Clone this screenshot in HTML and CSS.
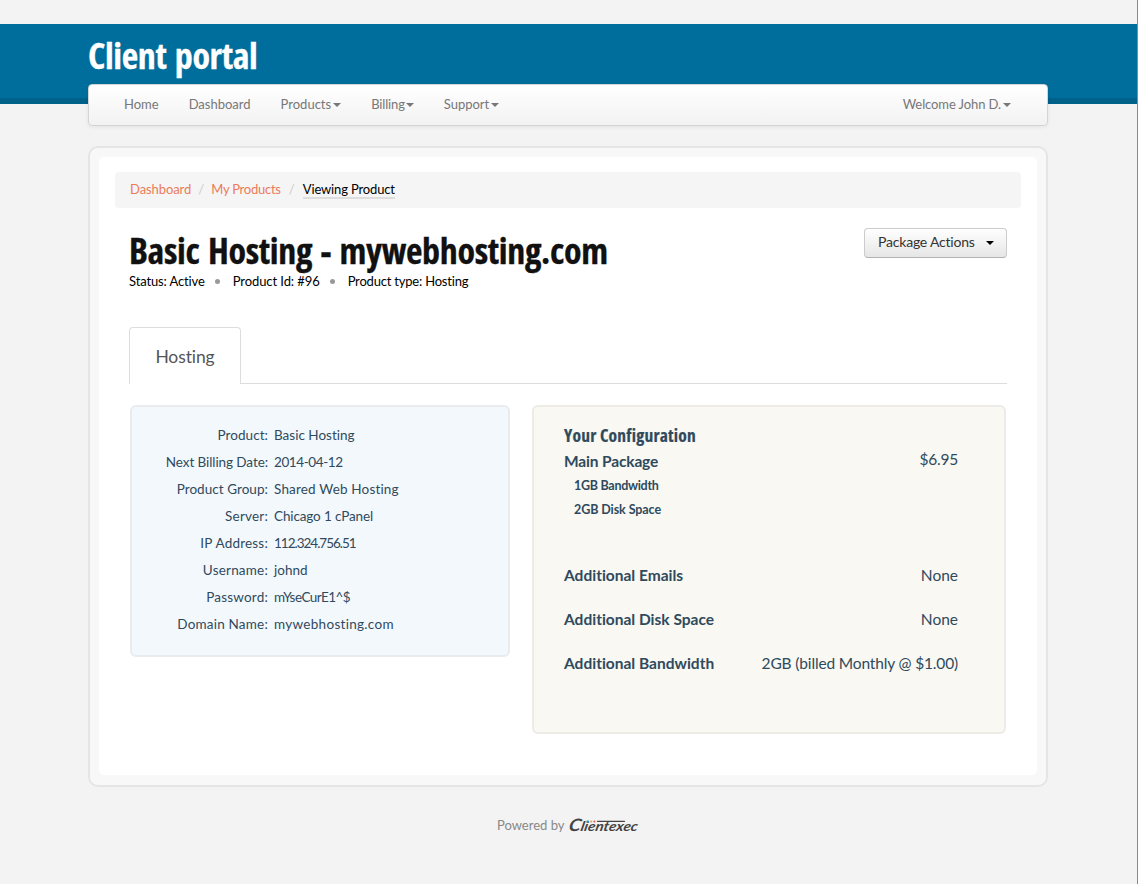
FILE: index.html
```html
<!DOCTYPE html>
<html lang="en">
<head>
<meta charset="utf-8">
<title>Client portal</title>
<link rel="stylesheet" href="styles.css">
</head>
<body>
<header class="masthead">
  <div class="container">
    <h1 class="brand">Client portal</h1>
    <nav class="navbar">
      <a class="nav-home">Home</a>
      <a class="nav-dash">Dashboard</a>
      <a class="nav-products">Products<i class="caret"></i></a>
      <a class="nav-billing">Billing<i class="caret"></i></a>
      <a class="nav-support">Support<i class="caret"></i></a>
      <a class="nav-user">Welcome John D.<i class="caret"></i></a>
    </nav>
  </div>
</header>
<main class="container frame">
  <div class="page">
    <div class="breadcrumb">
      <a class="crumb-home">Dashboard</a><span class="sep">/</span><a class="crumb-products">My Products</a><span class="sep last">/</span><span class="current">Viewing Product</span>
    </div>
    <div class="content">
      <div class="heading">
        <div>
          <h2 class="title">Basic Hosting - mywebhosting.com</h2>
          <div class="meta">
            <span class="m-status">Status: Active</span><b class="dot"></b><span class="m-id">Product Id: #96</span><b class="dot"></b><span class="m-type">Product type: Hosting</span>
          </div>
        </div>
        <button class="btn"><span>Package Actions</span><i class="caret"></i></button>
      </div>
      <div class="tabs"><div class="tab"><span>Hosting</span></div></div>
      <div class="panels">
        <dl class="panel details">
          <dt>Product:</dt><dd>Basic Hosting</dd>
          <dt class="tight">Next Billing Date:</dt><dd class="date">2014-04-12</dd>
          <dt>Product Group:</dt><dd class="group">Shared Web Hosting</dd>
          <dt class="wide">Server:</dt><dd class="server">Chicago 1 cPanel</dd>
          <dt class="wide">IP Address:</dt><dd class="ip">112.324.756.51</dd>
          <dt class="wide">Username:</dt><dd>johnd</dd>
          <dt class="wide">Password:</dt><dd class="password">mYseCurE1^$</dd>
          <dt class="wide">Domain Name:</dt><dd class="domain">mywebhosting.com</dd>
        </dl>
        <section class="panel config">
          <h3>Your Configuration</h3>
          <div class="row main"><strong>Main Package</strong><span>$6.95</span></div>
          <ul><li class="bandwidth">1GB Bandwidth</li><li>2GB Disk Space</li></ul>
          <div class="row"><strong>Additional Emails</strong><span>None</span></div>
          <div class="row"><strong>Additional Disk Space</strong><span>None</span></div>
          <div class="row"><strong>Additional Bandwidth</strong><span class="billed">2GB (billed Monthly @ $1.00)</span></div>
        </section>
      </div>
    </div>
  </div>
</main>
<footer class="footer">
  <span>Powered by</span>
  <svg class="logo" width="76" height="28" viewBox="0 -4 76 28">
    <text transform="translate(1 16) skewX(-12)" textLength="69" lengthAdjust="spacingAndGlyphs"><tspan class="cap">C</tspan>lientexec</text>
    <path d="M30.5 6.3H57.5" stroke="#444" stroke-width="1.3" stroke-linecap="round"/>
    <circle cx="20.7" cy="6.5" r="1.2" fill="#2a9fd0"/><circle cx="24.2" cy="6.5" r="1.1" fill="#f0a050"/><circle cx="27.4" cy="6.5" r="1.1" fill="#e2604c"/>
  </svg>
</footer>
</body>
</html>
```
FILE: styles.css
```css
* { box-sizing: border-box; }
html { background: #f3f3f3; }
body {
  margin: 0;
  padding-top: 24px;
  height: 884px;
  overflow: hidden;
  border-right: 1px solid #8a8a8a;
  background: #f3f3f3;
  font-family: Lato, "Open Sans", sans-serif;
  font-size: 13px;
  font-variant-ligatures: none;
  line-height: 20px;
  color: #000;
}
h1, h2, h3, ul, dl, dd { margin: 0; padding: 0; }
.container { width: 960px; margin-left: 88px; }
.masthead { height: 80px; background: #006e9c; border-bottom: 6px solid #006189; }
.brand, .title, .config h3 {
  font-family: "Open Sans", sans-serif;
  font-weight: 700;
  font-stretch: 75%;
  white-space: nowrap;
}
.brand, .title { -webkit-text-stroke: .3px currentColor; }
.brand {
  height: 60px;
  font-size: 36px;
  line-height: 64px;
  letter-spacing: -.4px;
  word-spacing: 2.4px;
  color: #fff;
}
.navbar {
  position: relative;
  display: flex;
  height: 42px;
  padding: 0 36px 0 35px;
  border: 1px solid #d4d4d4;
  border-radius: 4px;
  background: linear-gradient(#fff, #f2f2f2);
  box-shadow: 0 1px 4px rgba(0, 0, 0, .065);
  line-height: 39px;
  color: #777;
}
.navbar a { margin-right: 30px; white-space: nowrap; }
.navbar .nav-billing { letter-spacing: -.15px; }
.navbar .nav-user { margin: 0 0 0 auto; letter-spacing: -.1px; }
.caret {
  display: inline-block;
  margin-left: 2px;
  vertical-align: 2px;
  border: 4px solid transparent;
  border-top-color: currentColor;
  border-bottom: 0;
}
.nav-billing .caret { margin-left: 1px; }
.frame {
  height: 641px;
  margin-top: 42px;
  padding: 9px 9px 10px;
  border: 2px solid #e5e5e5;
  border-radius: 10px;
  background: #f8f8f8;
}
.page { height: 618px; padding: 15px 16px; border-radius: 5px; background: #fff; }
.breadcrumb {
  display: flex;
  align-items: center;
  height: 36px;
  padding: 0 15px 2px;
  border-radius: 4px;
  background: #f5f5f5;
}
.breadcrumb a { color: #eb7b59; }
.breadcrumb .crumb-products { letter-spacing: -.24px; }
.sep { width: 20px; text-align: center; color: #ccc; }
.breadcrumb .crumb-home { letter-spacing: -.08px; }
.sep.last { width: 22px; }
.current { height: 19px; margin-top: 1px; line-height: 19px; letter-spacing: -.15px; border-bottom: 2px solid #ddd; }
.content { padding: 0 14px; }
.heading { display: flex; justify-content: space-between; height: 119px; padding-top: 20px; }
.title {
  margin-top: 3px;
  height: 41px;
  font-size: 36px;
  line-height: 40px;
  letter-spacing: -.35px;
  word-spacing: 2.3px;
  color: #111;
}
.meta { display: flex; align-items: center; height: 20px; padding-bottom: 3px; }
.m-status { letter-spacing: -.13px; }
.m-id { letter-spacing: -.08px; }
.m-type { letter-spacing: -.2px; }
.dot { width: 5px; height: 5px; margin: 2px 13px 0 10px; border-radius: 50%; background: #999; }
.btn {
  display: flex;
  align-items: center;
  justify-content: space-between;
  width: 143px;
  height: 30px;
  padding: 0 12px 3px 13px;
  border: 1px solid #ccc;
  border-bottom-color: #b3b3b3;
  border-radius: 4px;
  background: linear-gradient(#fff, #e6e6e6);
  font: 14px Lato, sans-serif;
  letter-spacing: -.2px;
  color: #333;
}
.btn .caret { margin-top: 3px; border-top-color: #000; }
.tabs { height: 57px; border-bottom: 1px solid #ddd; }
.tab {
  width: 112px;
  height: 57px;
  border: 1px solid #ddd;
  border-bottom: 0;
  border-radius: 4px 4px 0 0;
  background: #fff;
  font-size: 17.5px;
  line-height: 58px;
  letter-spacing: -.1px;
  text-align: center;
  color: #555;
}
.panels { display: flex; justify-content: space-between; align-items: flex-start; padding: 21px 1px 0; }
.panel { border: 2px solid #e8ecef; border-radius: 6px; color: #2f4a5c; }
.details {
  display: grid;
  grid-template-columns: 136px 1fr;
  grid-auto-rows: 27px;
  column-gap: 6px;
  width: 380px;
  height: 252px;
  padding-top: 15px;
  background: #f3f8fd;
  font-size: 13.5px;
  line-height: 27px;
}
.details dt { text-align: right; letter-spacing: .05px; }
.details dt.tight { letter-spacing: -.08px; }
.details dt.wide { letter-spacing: .2px; }
.date { letter-spacing: -.4px; }
.group { letter-spacing: .17px; }
.server { letter-spacing: -.13px; }
.ip { letter-spacing: -1px; }
.password { letter-spacing: -.55px; }
.domain { letter-spacing: .3px; }
.config { width: 474px; height: 329px; padding: 18px 46px 0 30px; border-color: #ecebe6; background: #f9f8f3; }
.config h3 { height: 24px; font-size: 17.5px; line-height: 20px; letter-spacing: .22px; -webkit-text-stroke: .2px currentColor; }
.row { display: flex; justify-content: space-between; height: 44px; font-size: 15.5px; line-height: 24px; white-space: nowrap; }
.row.main { height: 24px; }
.main strong { letter-spacing: -.15px; }
.main span { margin-top: -2px; letter-spacing: -.2px; }
.billed { letter-spacing: -.15px; }
.config ul { height: 90px; padding: 1px 0 0 10px; list-style: none; font-size: 12.5px; font-weight: 700; line-height: 24px; letter-spacing: -.08px; }
.bandwidth { letter-spacing: -.28px; }
.footer { display: flex; align-items: center; height: 20px; margin: 28px 0 0 497px; gap: 3px; color: #888; }
.logo { flex: none; overflow: visible; }
.logo text { font: italic 700 13.5px Lato, sans-serif; fill: #444; }
.logo .cap { font-size: 17px; }
```
